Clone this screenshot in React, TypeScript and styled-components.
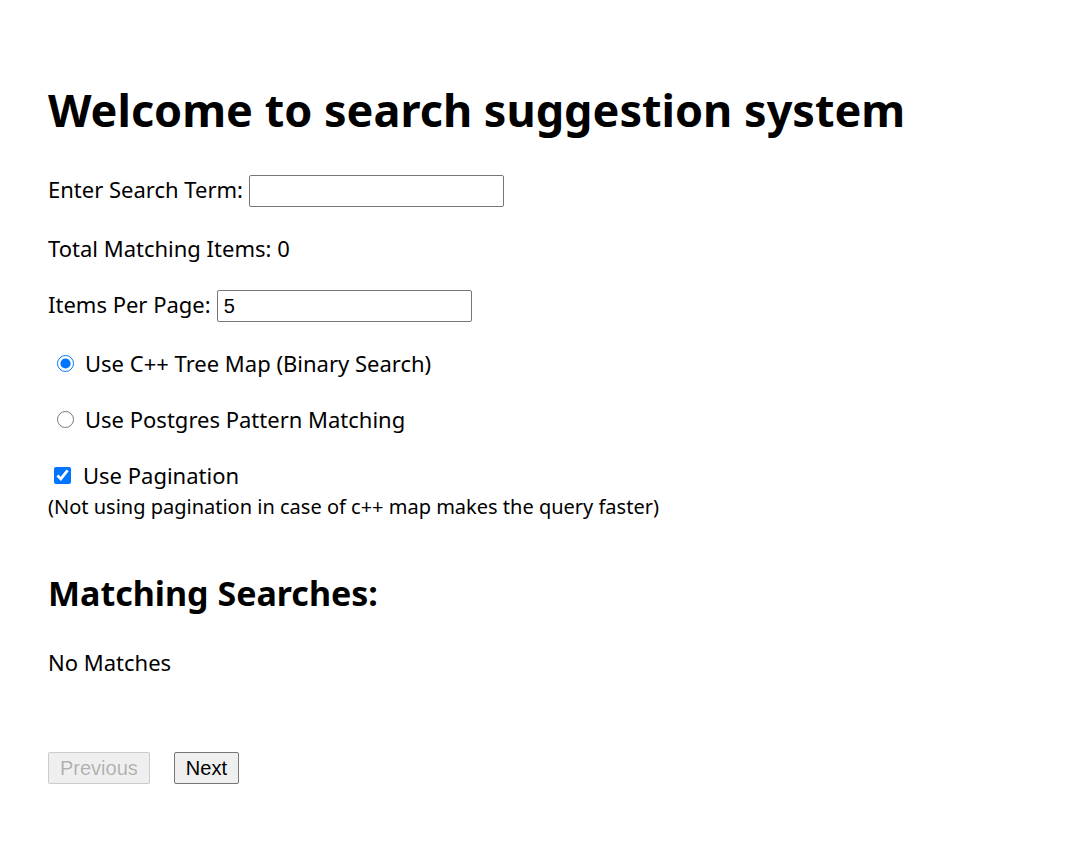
import React from "react";
import styled, { createGlobalStyle } from "styled-components";

const Global = createGlobalStyle`
  html, body { margin: 0; padding: 0; background: #fff; }
  body { font-family: "Noto Sans", "Open Sans", sans-serif; color: #000; }
`;

const Page = styled.main`
  padding: 82px 48px 40px;
  font-size: 22px;
`;

const Title = styled.h1`
  font-size: 45px;
  font-weight: 700;
  margin: 0 0 37px;
  line-height: 56px;
`;

const Field = styled.div`
  display: flex;
  align-items: center;
  gap: 6px;
  height: 32px;
  margin-bottom: 25px;
`;

const Label = styled.label`
  line-height: 32px;
  padding-bottom: 4px;
`;

const TextInput = styled.input`
  box-sizing: border-box;
  width: 255px;
  height: 32px;
  border: 1px solid #767676;
  border-radius: 2px;
  padding: 1px 6px;
  font: 20px "Liberation Sans", Arial, sans-serif;
  color: #000;
`;

const Stat = styled.p`
  margin: 0 0 26px;
  line-height: 32px;
`;

const Option = styled.label`
  display: flex;
  align-items: center;
  gap: 11px;
  height: 32px;
  padding-left: 9px;
  margin-bottom: 24px;
  input { margin: 0; width: 17px; height: 17px; }
`;

const CheckOption = styled(Option)`
  margin-bottom: 2px;
  padding-left: 6px;
  gap: 12px;
`;

const Note = styled.div`
  font-size: 20px;
  line-height: 28px;
  margin-bottom: 50px;
`;

const SubTitle = styled.h2`
  font-size: 34px;
  font-weight: 700;
  margin: 0 0 31px;
  line-height: 44px;
`;

const Empty = styled.p`
  margin: 0 0 74px;
  line-height: 32px;
`;

const Buttons = styled.div`
  display: flex;
  gap: 24px;
`;

const Button = styled.button`
  height: 32px;
  padding: 0 11px;
  font: 20px "Liberation Sans", Arial, sans-serif;
  color: #000;
  background: #efefef;
  border: 1px solid #767676;
  border-radius: 2px;
  &:disabled {
    color: rgba(16, 16, 16, 0.3);
    border-color: rgba(118, 118, 118, 0.3);
    background: #efefef;
  }
`;

export default function App() {
  return (
    <>
      <Global />
      <Page>
        <Title>Welcome to search suggestion system</Title>
        <Field>
          <Label htmlFor="term">Enter Search Term:</Label>
          <TextInput id="term" type="text" defaultValue="" />
        </Field>
        <Stat>Total Matching Items: 0</Stat>
        <Field>
          <Label htmlFor="per">Items Per Page:</Label>
          <TextInput id="per" type="text" defaultValue="5" />
        </Field>
        <Option>
          <input type="radio" name="mode" defaultChecked />
          Use C++ Tree Map (Binary Search)
        </Option>
        <Option>
          <input type="radio" name="mode" />
          Use Postgres Pattern Matching
        </Option>
        <CheckOption>
          <input type="checkbox" defaultChecked />
          Use Pagination
        </CheckOption>
        <Note>(Not using pagination in case of c++ map makes the query faster)</Note>
        <SubTitle>Matching Searches:</SubTitle>
        <Empty>No Matches</Empty>
        <Buttons>
          <Button disabled>Previous</Button>
          <Button>Next</Button>
        </Buttons>
      </Page>
    </>
  );
}
